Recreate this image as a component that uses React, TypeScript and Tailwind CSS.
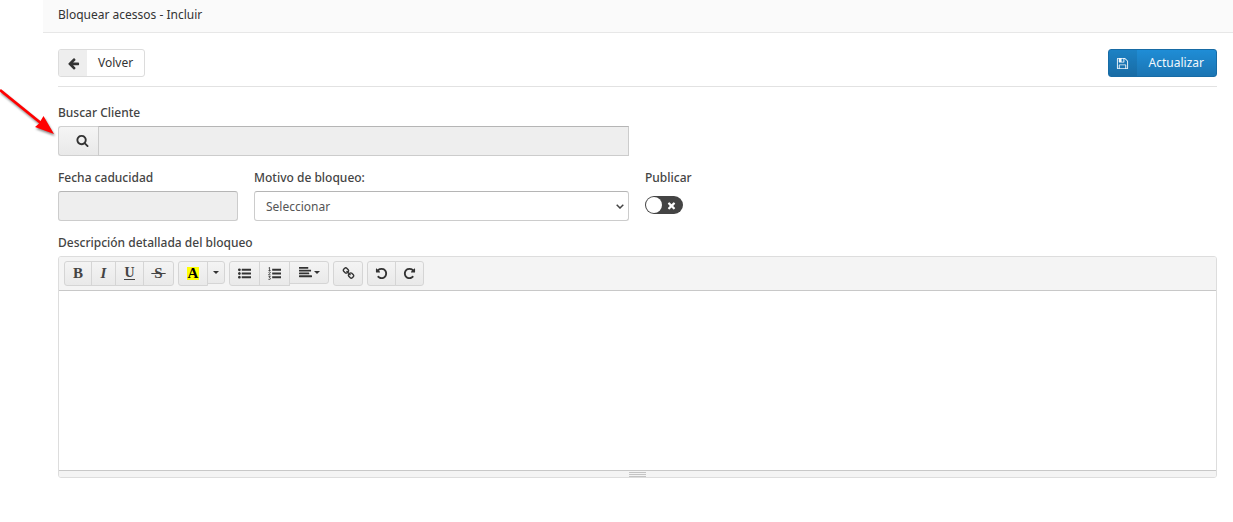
import { useState } from "react";
import type { ReactNode } from "react";
import clsx from "clsx";

const PATHS = {
  arrowLeft:
    "M1664 896v128q0 53-32.5 90.5t-84.5 37.5h-704l293 294q38 36 38 90t-38 90l-75 76q-37 37-90 37-52 0-91-37l-651-652q-37-37-37-90 0-52 37-91l651-650q38-38 91-38 52 0 90 38l75 74q38 38 38 91t-38 91l-293 293h704q52 0 84.5 37.5t32.5 90.5z",
  search:
    "M1216 832q0-185-131.5-316.5t-316.5-131.5-316.5 131.5-131.5 316.5 131.5 316.5 316.5 131.5 316.5-131.5 131.5-316.5zm512 832q0 52-38 90t-90 38q-54 0-90-38l-343-342q-179 124-399 124-143 0-273.5-55.5t-225-150-150-225-55.5-273.5 55.5-273.5 150-225 225-150 273.5-55.5 273.5 55.5 225 150 150 225 55.5 273.5q0 220-124 399l343 343q37 37 37 90z",
  save: "M512 1536h768v-384h-768v384zm896 0h128v-896q0-14-10-38.5t-20-34.5l-281-281q-10-10-34-20t-39-10v416q0 40-28 68t-68 28h-576q-40 0-68-28t-28-68v-416h-128v1280h128v-416q0-40 28-68t68-28h832q40 0 68 28t28 68v416zm-384-928v-320q0-13-9.5-22.5t-22.5-9.5h-192q-13 0-22.5 9.5t-9.5 22.5v320q0 13 9.5 22.5t22.5 9.5h192q13 0 22.5-9.5t9.5-22.5zm640 32v928q0 40-28 68t-68 28h-1344q-40 0-68-28t-28-68v-1344q0-40 28-68t68-28h928q40 0 88 20t76 48l280 280q28 28 48 76t20 88z",
  listUl:
    "M384 1408q0 80-56 136t-136 56-136-56-56-136 56-136 136-56 136 56 56 136zm0-512q0 80-56 136t-136 56-136-56-56-136 56-136 136-56 136 56 56 136zm1408 416v192q0 13-9.500 22.500t-22.500 9.500h-1216q-13 0-22.500-9.500t-9.500-22.500v-192q0-13 9.500-22.500t22.500-9.500h1216q13 0 22.500 9.500t9.500 22.500zm-1408-928q0 80-56 136t-136 56-136-56-56-136 56-136 136-56 136 56 56 136zm1408 416v192q0 13-9.500 22.500t-22.500 9.500h-1216q-13 0-22.500-9.500t-9.500-22.500v-192q0-13 9.500-22.500t22.500-9.500h1216q13 0 22.500 9.500t9.500 22.500zm0-512v192q0 13-9.500 22.500t-22.500 9.500h-1216q-13 0-22.500-9.500t-9.500-22.500v-192q0-13 9.500-22.500t22.500-9.500h1216q13 0 22.500 9.500t9.500 22.500z",
  alignLeft:
    "M1792 1344v128q0 26-19 45t-45 19h-1664q-26 0-45-19t-19-45v-128q0-26 19-45t45-19h1664q26 0 45 19t19 45zm-384-384v128q0 26-19 45t-45 19h-1280q-26 0-45-19t-19-45v-128q0-26 19-45t45-19h1280q26 0 45 19t19 45zm256-384v128q0 26-19 45t-45 19h-1536q-26 0-45-19t-19-45v-128q0-26 19-45t45-19h1536q26 0 45 19t19 45zm-384-384v128q0 26-19 45t-45 19h-1152q-26 0-45-19t-19-45v-128q0-26 19-45t45-19h1152q26 0 45 19t19 45z",
  link: "M1520 1216q0-40-28-68l-208-208q-28-28-68-28-42 0-72 32 3 3 19 18.500t21.500 21.500 15 19 13 25.500 3.500 27.500q0 40-28 68t-68 28q-15 0-27.500-3.500t-25.500-13-19-15-21.500-21.500-18.500-19q-33 31-33 73 0 40 28 68l206 207q27 27 68 27 40 0 68-26l147-146q28-28 28-67zm-703-705q0-40-28-68l-206-207q-28-28-68-28-39 0-68 27l-147 146q-28 28-28 67 0 40 28 68l208 208q27 27 68 27 42 0 72-31-3-3-19-18.500t-21.500-21.500-15-19-13-25.500-3.500-27.500q0-40 28-68t68-28q15 0 27.500 3.500t25.500 13 19 15 21.500 21.500 18.500 19q33-31 33-73zm895 705q0 120-85 203l-147 146q-83 83-203 83-121 0-204-85l-206-207q-83-83-83-203 0-123 88-209l-88-88q-86 88-208 88-120 0-204-84l-208-208q-84-84-84-204t85-203l147-146q83-83 203-83 121 0 204 85l206 207q83 83 83 203 0 123-88 209l88 88q86-88 208-88 120 0 204 84l208 208q84 84 84 204z",
  undo: "M1664 896q0 156-61 298t-164 245-245 164-298 61q-172 0-327-72.500t-264-204.500q-7-10-6.500-22.500t8.500-20.500l137-138q10-9 25-9 16 2 23 12 73 95 179 147t225 52q104 0 198.500-40.500t163.500-109.500 109.500-163.500 40.500-198.500-40.500-198.500-109.500-163.500-163.500-109.500-198.500-40.500q-98 0-188 35.500t-160 101.500l137 138q31 30 14 69-17 40-59 40h-448q-26 0-45-19t-19-45v-448q0-42 40-59 39-17 69 14l130 129q107-101 244.500-156.500t284.500-55.500q156 0 298 61t245 164 164 245 61 298z",
  times:
    "M1490 1322q0 40-28 68l-136 136q-28 28-68 28t-68-28l-294-294-294 294q-28 28-68 28t-68-28l-136-136q-28-28-28-68t28-68l294-294-294-294q-28-28-28-68t28-68l136-136q28-28 68-28t68 28l294 294 294-294q28-28 68-28t68 28l136 136q28 28 28 68t-28 68l-294 294 294 294q28 28 28 68z",
};

function Icon({ name, className = "size-[13px]" }: { name: keyof typeof PATHS; className?: string }) {
  return (
    <svg viewBox="0 0 1792 1792" fill="currentColor" className={clsx("shrink-0", className)} aria-hidden="true">
      <path d={PATHS[name]} />
    </svg>
  );
}

function OrderedListIcon() {
  return (
    <svg viewBox="0 0 14 14" className="size-[13px] shrink-0" aria-hidden="true">
      <path fill="currentColor" d="M4.500 2h9.500v2h-9.500zM4.500 6h9.500v2h-9.500zM4.500 10h9.500v2h-9.500z" />
      <path
        fill="none"
        stroke="currentColor"
        strokeWidth="0.9"
        d="M0.700 1l1-.6v3.400M0.500 3.800h2.300M0.600 6c.4-1 2.100-.9 2 .1 0 .8-2 1.400-2 2.400h2.200M0.600 10.300h1.900l-1 1.200c1.500 0 1.500 2-.1 2-.4 0-.8-.1-1-.4"
      />
    </svg>
  );
}

function Caret() {
  return (
    <svg viewBox="0 0 6 3" className="h-[3px] w-[6px] shrink-0" fill="currentColor" aria-hidden="true">
      <path d="M0 0h6L3 3z" />
    </svg>
  );
}

function ToolGroup({ children }: { children: ReactNode }) {
  return <div className="flex items-start">{children}</div>;
}

function Tool({ label, className, children }: { label: string; className: string; children: ReactNode }) {
  return (
    <button
      type="button"
      aria-label={label}
      title={label}
      className={clsx(
        "-ml-px flex items-center justify-center border border-[#d5d5d5] bg-linear-to-b from-[#f4f4f4] to-[#e9e9e9] pb-px text-[#333] first:ml-0 first:rounded-l-[3px] last:rounded-r-[3px]",
        className,
      )}
    >
      {children}
    </button>
  );
}

const glyph = "font-['Liberation_Serif',serif] text-[15px] leading-4 font-bold text-[#444]";
const labelStyle = "mb-[3px] block leading-5 font-medium text-[#444]";
const fieldStyle = "block h-[30px] w-full border border-[#ccc] border-t-[#b5b5b5]";

export default function App() {
  const [published, setPublished] = useState(false);

  return (
    <div className="relative bg-white pb-11 pl-[43px] font-['Noto_Sans',sans-serif] text-[12px] text-[#333]">
      <header className="border-b border-[#e7e7e7] bg-[#fafafa] px-[15px] pt-[5px] pb-[7px]">
        <h1 className="leading-5">Bloquear acessos - Incluir</h1>
      </header>

      <main className="pr-4 pl-[15px]">
        <div className="flex justify-between border-b border-[#e2e2e2] pt-4 pb-[9px]">
          <button type="button" className="flex h-7 overflow-hidden rounded-[3px] border border-[#dcdcdc] bg-white">
            <span className="flex h-full w-7 items-center justify-center bg-[#eee] text-[#333]">
              <Icon name="arrowLeft" />
            </span>
            <span className="px-[11px] leading-[25px]">Volver</span>
          </button>
          <button
            type="button"
            className="flex h-7 overflow-hidden rounded-[3px] border border-[#176ba5] bg-linear-to-b from-[#1f8dd6] to-[#1b75b3] text-[#f2f8fc]"
          >
            <span className="flex h-full w-7 items-center justify-center bg-black/8">
              <Icon name="save" />
            </span>
            <span className="px-3 leading-[25px]">Actualizar</span>
          </button>
        </div>

        <form className="pt-4" onSubmit={(e) => e.preventDefault()}>
          <div className="grid grid-cols-[180fr_375fr_572fr] gap-x-4 gap-y-3">
            <div className="col-span-2">
              <label htmlFor="cliente" className={labelStyle}>
                Buscar Cliente
              </label>
              <div className="flex">
                <button
                  type="button"
                  aria-label="Buscar"
                  className="flex h-[30px] w-10 shrink-0 items-center justify-end rounded-l-[3px] border border-r-0 border-[#d0d0d0] bg-linear-to-b from-[#f5f5f5] to-[#e9e9e9] pr-[9px] pb-px text-[#333]"
                >
                  <Icon name="search" />
                </button>
                <input id="cliente" readOnly className={clsx(fieldStyle, "bg-[#eee] px-3")} />
              </div>
            </div>

            <div className="col-start-1">
              <label htmlFor="fecha" className={labelStyle}>
                Fecha caducidad
              </label>
              <input id="fecha" readOnly className={clsx(fieldStyle, "rounded-[3px] bg-[#eee] px-3")} />
            </div>
            <div>
              <label htmlFor="motivo" className={labelStyle}>
                Motivo de bloqueo:
              </label>
              <div className="relative">
                <select
                  id="motivo"
                  className={clsx(fieldStyle, "appearance-none rounded-[3px] bg-white px-[11px] pt-px text-[#555]")}
                >
                  <option>Seleccionar</option>
                </select>
                <svg
                  viewBox="0 0 8 5"
                  className="pointer-events-none absolute top-[13px] right-[5px] h-[5px] w-2"
                  fill="none"
                  stroke="#444"
                  strokeWidth="1.5"
                  aria-hidden="true"
                >
                  <path d="M0.700 0.700L4 4L7.300 0.700" />
                </svg>
              </div>
            </div>
            <div>
              <label htmlFor="publicar" className={labelStyle}>
                Publicar
              </label>
              <label
                htmlFor="publicar"
                className={clsx(
                  "mt-2 flex h-[18px] w-[38px] cursor-pointer items-center justify-between rounded-full bg-[#444] pr-1.5 pl-px",
                  published && "flex-row-reverse",
                )}
              >
                <input
                  id="publicar"
                  type="checkbox"
                  role="switch"
                  checked={published}
                  onChange={(e) => setPublished(e.target.checked)}
                  className="sr-only"
                />
                <span className="size-4 rounded-full bg-white" />
                <Icon name="times" className="size-[11px] text-white" />
              </label>
            </div>
          </div>

          <div className="mt-3">
            <label htmlFor="descripcion" className={labelStyle}>
              Descripción detallada del bloqueo
            </label>
            <div className="overflow-hidden rounded-[3px] border border-[#ddd]">
              <div className="flex gap-1 border-b border-[#c8c8c8] bg-[#f4f4f4] px-[5px] py-1">
                <ToolGroup>
                  <Tool label="Negrita" className="h-[25px] w-7">
                    <span className={glyph}>B</span>
                  </Tool>
                  <Tool label="Cursiva" className="h-[25px] w-[25px]">
                    <span className={clsx(glyph, "italic")}>I</span>
                  </Tool>
                  <Tool label="Subrayado" className="h-[25px] w-[29px]">
                    <span className="border-b border-current font-['Liberation_Serif',serif] text-[14px] leading-3 font-bold text-[#444]">
                      U
                    </span>
                  </Tool>
                  <Tool label="Tachado" className="h-[25px] w-[31px]">
                    <span className={clsx(glyph, "line-through decoration-1")}>&thinsp;S&thinsp;</span>
                  </Tool>
                </ToolGroup>
                <ToolGroup>
                  <Tool label="Color" className="h-[25px] w-[30px]">
                    <span className="bg-[#ff0] px-px font-['Liberation_Serif',serif] text-[15px] leading-[13px] font-bold text-black">
                      A
                    </span>
                  </Tool>
                  <Tool label="Más colores" className="h-[23px] w-[18px]">
                    <Caret />
                  </Tool>
                </ToolGroup>
                <ToolGroup>
                  <Tool label="Lista" className="h-[25px] w-[31px]">
                    <Icon name="listUl" />
                  </Tool>
                  <Tool label="Lista numerada" className="h-[25px] w-[31px]">
                    <OrderedListIcon />
                  </Tool>
                  <Tool label="Párrafo" className="h-[23px] w-10 gap-0.5">
                    <Icon name="alignLeft" />
                    <Caret />
                  </Tool>
                </ToolGroup>
                <ToolGroup>
                  <Tool label="Enlace" className="h-[25px] w-[30px]">
                    <Icon name="link" />
                  </Tool>
                </ToolGroup>
                <ToolGroup>
                  <Tool label="Deshacer" className="h-[25px] w-[29px]">
                    <Icon name="undo" />
                  </Tool>
                  <Tool label="Rehacer" className="h-[25px] w-[29px]">
                    <Icon name="undo" className="size-[13px] -scale-x-100" />
                  </Tool>
                </ToolGroup>
              </div>
              <textarea id="descripcion" className="block h-[179px] w-full resize-none bg-white p-2 outline-none" />
              <div className="flex flex-col items-center gap-px border-t border-[#c8c8c8] bg-[#f4f4f4] pt-px">
                <span className="h-px w-[17px] bg-[#c4c4c4]" />
                <span className="h-px w-[17px] bg-[#c4c4c4]" />
                <span className="h-px w-[17px] bg-[#c4c4c4]" />
              </div>
            </div>
          </div>
        </form>
      </main>

      <svg
        viewBox="0 0 60 60"
        className="pointer-events-none absolute top-20 left-0 size-[60px] drop-shadow-[1px_2px_1px_rgba(0,0,0,0.45)]"
        aria-hidden="true"
      >
        <path d="M0 10L42 44" stroke="#f00" strokeWidth="2.800" />
        <path d="M54 54L35 47L39 43.500L43.500 36z" fill="#f00" />
      </svg>
    </div>
  );
}
